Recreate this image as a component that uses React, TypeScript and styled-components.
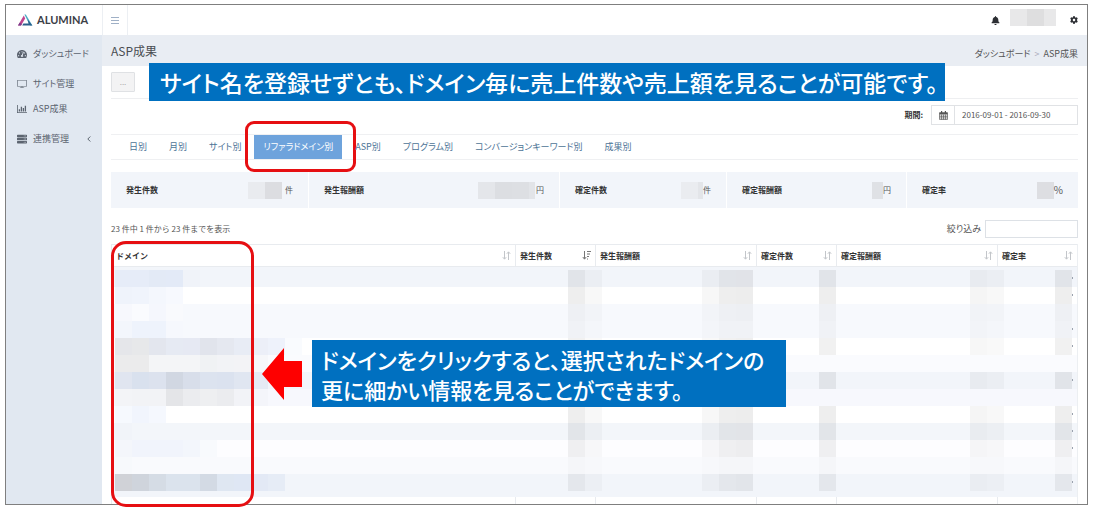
import React from 'react';
import styled, { createGlobalStyle, css } from 'styled-components';
import { FaBell, FaCog, FaServer, FaTachometerAlt } from 'react-icons/fa';
import { SlScreenDesktop } from 'react-icons/sl';

const GlobalStyle = createGlobalStyle`
  * { box-sizing: border-box; }
  body {
    margin: 0;
    background: #fff;
    color: #555;
    font-family: 'Noto Sans CJK JP', 'Noto Sans', sans-serif;
    font-size: 8px;
    line-height: 12px;
  }
  button, input { font: inherit; color: inherit; }
  a { color: inherit; text-decoration: none; }
  ul { list-style: none; margin: 0; padding: 0; }
`;

const proportional = css`
  font-size: 9px;
  font-feature-settings: 'palt';
`;

const Frame = styled.div`
  position: relative;
  margin: 4px 8px 6px 5px;
  border: 1px solid #7f7f7f;
  background: #fff;
`;

const Header = styled.header`
  display: flex;
  height: 30px;
`;

const Brand = styled.a`
  display: flex;
  align-items: center;
  gap: 4px;
  width: 96px;
  padding-left: 12px;
  color: #3c4047;
  font-family: Lato, sans-serif;
  font-size: 11px;
  font-weight: 700;
`;

const MenuButton = styled.button`
  display: flex;
  align-items: center;
  justify-content: center;
  width: 26px;
  padding: 0;
  border: solid #eceff3;
  border-width: 0 1px;
  background: none;
  color: #9fb0c6;
`;

const HeaderTools = styled.div`
  display: flex;
  align-items: center;
  gap: 10px;
  margin-left: auto;
  padding-right: 9px;
`;

const IconButton = styled.button`
  display: flex;
  padding: 0;
  border: 0;
  background: none;
  color: #2c2e33;
`;

const UserMask = styled.div`
  display: flex;
  height: 17px;
  margin: 0 4px 5px 0;
`;

const Tile = styled.span<{ $tone: string; $width?: number }>`
  flex: none;
  width: ${p => p.$width ?? 17}px;
  height: 17px;
  background: ${p => p.$tone};
`;

const Body = styled.div`
  display: flex;
`;

const Sidebar = styled.nav`
  display: flex;
  flex-direction: column;
  flex: none;
  gap: 5px;
  width: 96px;
  padding-top: 6px;
  background: #e1e8f1;
`;

const SideLink = styled.a`
  ${proportional}
  display: flex;
  align-items: center;
  gap: 6px;
  height: 25px;
  padding: 0 11px;
  color: #5c6470;
  white-space: nowrap;
  svg { flex: none; }
  svg:nth-of-type(2) { margin-left: auto; }
`;

const Main = styled.main`
  flex: 1;
  min-width: 0;
`;

const TitleBar = styled.div`
  display: flex;
  align-items: center;
  justify-content: space-between;
  height: 31px;
  padding: 0 9px;
  background: #e9edf3;
`;

const Title = styled.h1`
  margin: 0;
  font-size: 12px;
  font-weight: 400;
  line-height: 31px;
  color: #4a4d52;
`;

const Crumbs = styled.div`
  ${proportional}
  display: flex;
  gap: 4px;
  padding-top: 6px;
  i { color: #aab; font-style: normal; }
`;

const Content = styled.div`
  padding: 6px 9px 0;
`;

const ActionRow = styled.div`
  padding-bottom: 6px;
  border-bottom: 1px solid #eeeff1;
`;

const MoreButton = styled.button`
  display: block;
  width: 24px;
  height: 20px;
  padding: 0;
  border: 1px solid #dfe1e4;
  border-radius: 1px;
  background: #f3f3f4;
  color: #aaa;
`;

const PeriodRow = styled.div`
  display: flex;
  align-items: center;
  justify-content: flex-end;
  gap: 8px;
  padding: 6px 0 9px;
  label { color: #333; font-weight: 700; }
`;

const DateGroup = styled.div`
  display: flex;
  width: 147px;
  height: 20px;
  border: 1px solid #e0e2e5;
  input {
    flex: 1;
    min-width: 0;
    padding: 0 7px;
    border: 0;
    border-left: 1px solid #e0e2e5;
  }
`;

const DateIcon = styled.span`
  display: flex;
  align-items: center;
  justify-content: center;
  width: 22px;
`;

const Tabs = styled.ul`
  display: flex;
  gap: 4px;
  height: 26px;
  padding-left: 9px;
  border: solid #eff0f2;
  border-width: 1px 0;
`;

const Tab = styled.li`
  position: relative;
`;

const TabLink = styled.a<{ $active?: boolean }>`
  ${proportional}
  display: block;
  padding: 0 9px;
  line-height: 24px;
  white-space: nowrap;
  color: #4d7396;
  ${p => p.$active && css`
    background: #6ea3dc;
    color: #fff;
  `}
`;

const Outline = styled.div`
  position: absolute;
  border: 3px solid #e60f12;
  pointer-events: none;
`;

const TabOutline = styled(Outline)`
  inset: -14px -14px -13px -9px;
  border-radius: 9px;
`;

const DomainOutline = styled(Outline)`
  top: -3px;
  bottom: -3px;
  left: 0;
  width: 143px;
  border-radius: 15px;
`;

const Summary = styled.div`
  display: grid;
  grid-template-columns: 197fr 250fr 166fr 179fr 171fr;
  gap: 1px;
  margin-top: 12px;
`;

const SummaryItem = styled.div`
  display: flex;
  align-items: center;
  height: 36px;
  padding: 0 15px;
  background: #f2f5fa;
  strong { margin-right: auto; color: #333; }
`;

const SummaryMask = styled.div<{ $gap: number }>`
  display: flex;
  margin-right: ${p => p.$gap}px;
`;

const Unit = styled.span<{ $large?: boolean }>`
  font-size: ${p => (p.$large ? 10 : 8)}px;
`;

const ListBar = styled.div`
  display: flex;
  align-items: center;
  justify-content: space-between;
  padding: 12px 0 6px;
`;

const Filter = styled.label`
  ${proportional}
  display: flex;
  align-items: center;
  gap: 4px;
  input {
    width: 93px;
    height: 18px;
    padding: 0 4px;
    border: 1px solid #dde1e6;
  }
`;

const TableWrap = styled.div`
  position: relative;
`;

const Table = styled.table`
  width: 100%;
  table-layout: fixed;
  border-spacing: 0;
  border-right: 1px solid #eceff2;
`;

const HeadCell = styled.th<{ $width?: number }>`
  width: ${p => (p.$width ? `${p.$width}px` : 'auto')};
  height: 23px;
  padding: 0 4px;
  border: solid #e8ebef;
  border-width: 1px 0 1px 1px;
  color: #333;
  text-align: left;
`;

const HeadLabel = styled.span`
  display: flex;
  align-items: center;
  justify-content: space-between;
`;

const Row = styled.tr<{ $bg: string }>`
  height: 17px;
  background: ${p => p.$bg};
  &:first-child { height: 20px; vertical-align: bottom; }
  &:nth-last-child(2) { height: 23px; vertical-align: top; }
`;

const Cell = styled.td<{ $shift?: number }>`
  height: inherit;
  padding: 0 ${p => Math.max(p.$shift ?? 0, 0)}px 0 0;
  line-height: 0;
`;

const Tiles = styled.div<{ $end?: boolean; $shift?: number }>`
  display: flex;
  position: relative;
  height: 17px;
  padding-left: ${p => (p.$end ? 0 : 4)}px;
  justify-content: ${p => (p.$end ? 'flex-end' : 'flex-start')};
  margin-right: ${p => Math.min(p.$shift ?? 0, 0)}px;
`;

const Mark = styled.i`
  position: absolute;
  top: 7px;
  right: -1px;
  width: 1px;
  height: 2px;
  background: #9aa2ae;
`;

const TailCell = styled.td`
  height: 7px;
  padding: 0;
  border-left: 1px solid #e8ebef;
`;

const Callout = styled.p`
  position: absolute;
  margin: 0;
  background: #0070c0;
  color: #fff;
  font-weight: 500;
  font-feature-settings: 'palt';
  white-space: nowrap;
`;

const TopCallout = styled(Callout)`
  top: 58px;
  left: 143px;
  width: 796px;
  padding-left: 11px;
  font-size: 23px;
  line-height: 38px;
`;

const DomainCallout = styled(Callout)`
  top: 335px;
  left: 306px;
  width: 474px;
  padding: 4px 9px 3px;
  font-size: 22px;
  line-height: 30px;
`;

const Arrow = styled.svg`
  position: absolute;
  top: 343px;
  left: 256px;
`;

const Logo = () => (
  <svg width="15" height="12" viewBox="0 0 15 12" aria-hidden="true">
    <path d="M5.8 1.6 7.2 4.4 3 11.5 0 11.5Z" fill="#c0458f" />
    <path d="M1.6 8.8 3.9 9.9 3 11.5 0 11.5Z" fill="#7a3d8c" />
    <path d="M6.4.4 7.8.4 14.4 11.5 12 11.5Z" fill="#4aa9c4" />
    <path d="M9.6 5.4 14.4 11.5 4.2 11.5 5.4 9.4 10.6 9.4Z" fill="#2c5f8c" />
  </svg>
);

const BarChart = () => (
  <svg width="10" height="8" viewBox="0 0 20 16" fill="currentColor" aria-hidden="true">
    <path d="M0 0h1.6v14.4H20V16H0zM3.5 8.5h2.6v4.5H3.5zM7.5 3.5h2.6V13H7.5zM11.5 6h2.6v7h-2.6zM15.5 1.5h2.6V13h-2.6z" />
  </svg>
);

const Calendar = () => (
  <svg width="9" height="9" viewBox="0 0 18 18" aria-hidden="true">
    <path d="M1 3.5h16V17H1zM1 7.5h16M1 10.7h16M1 13.9h16M5 7v10M9 7v10M13 7v10" fill="none" stroke="#555" strokeWidth="1.3" />
    <path d="M1 3h16v3H1zM4 0h2.4v4H4zM11.6 0H14v4h-2.4z" fill="#555" />
  </svg>
);

const Burger = () => (
  <svg width="8" height="7" viewBox="0 0 8 7" fill="currentColor" aria-hidden="true">
    <path d="M0 0h8v1H0zM0 3h8v1H0zM0 6h8v1H0z" />
  </svg>
);

const Chevron = () => (
  <svg width="4" height="6" viewBox="0 0 4 6" fill="none" stroke="currentColor" aria-hidden="true">
    <path d="M3.3.5.8 3l2.5 2.5" />
  </svg>
);

const SortIcon = ({ active }: { active?: boolean }) =>
  active ? (
    <svg width="9" height="9" viewBox="0 0 9 9" aria-hidden="true">
      <path d="M2.5 0v8M.8 6 2.5 8.2 4.2 6" fill="none" stroke="#777" />
      <path d="M5 .5h4M5 3h3M5 5.5h2M5 8h1" stroke="#777" />
    </svg>
  ) : (
    <svg width="9" height="9" viewBox="0 0 9 9" fill="none" stroke="#c3c6ca" aria-hidden="true">
      <path d="M2.5 0v8M.8 6.2 2.5 8.2 4.2 6.2M6.5 9V1M4.8 2.8 6.5.8 8.2 2.8" />
    </svg>
  );

const tabs = ['日別', '月別', 'サイト別', 'リファラドメイン別', 'ASP別', 'プログラム別', 'コンバージョンキーワード別', '成果別'];

const summary = [
  { label: '発生件数', unit: '件', gap: 3, tiles: [['#e9ebef', 17], ['#dcdde1', 17]] },
  { label: '発生報酬額', unit: '円', gap: 1, tiles: [['#e4e6ea', 17], ['#dcdee2', 17], ['#dddfe3', 17], ['#e2e4e8', 6]] },
  { label: '確定件数', unit: '件', gap: 0, tiles: [['#eaecf0', 17], ['#e3e5e9', 5]] },
  { label: '確定報酬額', unit: '円', gap: 0, tiles: [['#dfe1e5', 11]] },
  { label: '確定率', unit: '%', gap: 0, tiles: [['#dddee2', 17]] },
] as { label: string; unit: string; gap: number; tiles: [string, number][] }[];

const columns = [
  { label: 'ドメイン' },
  { label: '発生件数', width: 80, active: true },
  { label: '発生報酬額', width: 161 },
  { label: '確定件数', width: 80 },
  { label: '確定報酬額', width: 161 },
  { label: '確定率', width: 80 },
];

// Relative darkness of each masked figure, and how far the mask sits from the cell's right edge.
const masks = [
  { weights: [1, 0.45], shift: -7 },
  { weights: [0.5, 1, 1.1], shift: 3 },
  { weights: [1], shift: 0 },
  { weights: [0.6, 0.45], shift: -7 },
  { weights: [1], shift: 5 },
];

const rows = [
  { bg: '#f2f5fa', level: 0.07, mark: true, tones: 'e6ecf8 e6ecf8 e3eaf6 e3eaf7 f0f3f9' },
  { bg: '#ffffff', level: 0.07, mark: true, tones: 'eff3fb f0f4fc f4f7fd f7f9fe' },
  { bg: '#f7f9fd', level: 0.04, mark: false, tones: 'f7f8fd fafbfe f5f7fd f9fafd' },
  { bg: '#f7f9fd', level: 0.03, mark: true, tones: 'f3f6fc eef3fc eef3fc f6f8fd' },
  { bg: '#ffffff', level: 0.06, mark: true, tones: 'e5e6ea e7e8ea e3e6ee e6eaf3 e6e9f3 e1e4ec e5e8f0 e8ecf5 eceff8 eef2fb f9fbfe' },
  { bg: '#fafbfe', level: 0, mark: false, tones: 'ebebec ebebec f4f5f7 f4f5f7 f4f5f7 f0f2f4 f2f3f6 f3f3f6 f6f7fa' },
  { bg: '#f2f5fa', level: 0.07, mark: true, tones: 'e0e5f0 d9e1ee dce2ee d1d7e2 d8deea dce3ef dbe2ef e0e6f1 e5eaf4' },
  { bg: '#f7f8fd', level: 0, mark: false, tones: 'f3f4f7 f2f3f6 f2f3f6 e4e5e8 ebecef eeeff1 ebecef f2f3f7 f4f5fa' },
  { bg: '#ffffff', level: 0.07, mark: true, tones: 'f6f9fe f1f5fd f5f8fe' },
  { bg: '#f3f6fa', level: 0.07, mark: true, tones: 'f1f4f9' },
  { bg: '#fdfdff', level: 0.06, mark: true, tones: 'f4f6fb f1f4fc f1f4fc f1f4fc f3f6fc f8fafd' },
  { bg: '#f9fafd', level: 0.015, mark: false, tones: 'f7f9fc' },
  { bg: '#f2f5fa', level: 0.06, mark: true, tones: 'd0d2d7 cfd4dc d5dce5 dbe3ed dbe3ed d3dae4 dfe7f2 dfe7f4 e3e9f5 e6ecf6' },
];

export default function App() {
  return (
    <>
      <GlobalStyle />
      <Frame>
        <Header>
          <Brand href="#"><Logo />ALUMINA</Brand>
          <MenuButton aria-label="メニュー"><Burger /></MenuButton>
          <HeaderTools>
            <IconButton aria-label="通知"><FaBell size={9} /></IconButton>
            <UserMask>
              <Tile $tone="#e8e8e9" /><Tile $tone="#dededf" /><Tile $tone="#e8e8e9" $width={12} />
            </UserMask>
            <IconButton aria-label="設定"><FaCog size={8} /></IconButton>
          </HeaderTools>
        </Header>
        <Body>
          <Sidebar>
            <SideLink href="#"><FaTachometerAlt size={10} />ダッシュボード</SideLink>
            <div>
              <SideLink href="#"><SlScreenDesktop size={10} />サイト管理</SideLink>
              <SideLink href="#"><BarChart />ASP成果</SideLink>
            </div>
            <SideLink href="#"><FaServer size={10} />連携管理<Chevron /></SideLink>
          </Sidebar>
          <Main>
            <TitleBar>
              <Title>ASP成果</Title>
              <Crumbs><a href="#">ダッシュボード</a><i>&gt;</i><span>ASP成果</span></Crumbs>
            </TitleBar>
            <Content>
              <ActionRow><MoreButton>...</MoreButton></ActionRow>
              <PeriodRow>
                <label htmlFor="period">期間:</label>
                <DateGroup>
                  <DateIcon><Calendar /></DateIcon>
                  <input id="period" defaultValue="2016-09-01 - 2016-09-30" />
                </DateGroup>
              </PeriodRow>
              <Tabs>
                {tabs.map((name, i) => (
                  <Tab key={name}>
                    <TabLink href="#" $active={i === 3}>{name}</TabLink>
                    {i === 3 && <TabOutline />}
                  </Tab>
                ))}
              </Tabs>
              <Summary>
                {summary.map(s => (
                  <SummaryItem key={s.label}>
                    <strong>{s.label}</strong>
                    <SummaryMask $gap={s.gap}>
                      {s.tiles.map(([tone, width], i) => <Tile key={i} $tone={tone} $width={width} />)}
                    </SummaryMask>
                    <Unit $large={s.unit === '%'}>{s.unit}</Unit>
                  </SummaryItem>
                ))}
              </Summary>
              <ListBar>
                <span>23 件中 1 件から 23 件までを表示</span>
                <Filter>絞り込み<input type="search" /></Filter>
              </ListBar>
              <TableWrap>
                <Table>
                  <thead>
                    <tr>
                      {columns.map(c => (
                        <HeadCell key={c.label} $width={c.width}>
                          <HeadLabel>{c.label}<SortIcon active={c.active} /></HeadLabel>
                        </HeadCell>
                      ))}
                    </tr>
                  </thead>
                  <tbody>
                    {rows.map((r, i) => (
                      <Row key={i} $bg={r.bg}>
                        <Cell>
                          <Tiles>
                            {r.tones.split(' ').map((t, j) => <Tile key={j} $tone={`#${t}`} />)}
                          </Tiles>
                        </Cell>
                        {masks.map((m, k) => (
                          <Cell key={k} $shift={m.shift}>
                            <Tiles $end $shift={m.shift}>
                              {m.weights.map((w, j) => (
                                <Tile key={j} $tone={`rgba(20, 20, 20, ${(w * r.level).toFixed(3)})`} />
                              ))}
                              {r.mark && k === masks.length - 1 && <Mark />}
                            </Tiles>
                          </Cell>
                        ))}
                      </Row>
                    ))}
                    <tr>
                      {columns.map(c => <TailCell key={c.label} />)}
                    </tr>
                  </tbody>
                </Table>
                <DomainOutline />
              </TableWrap>
            </Content>
          </Main>
        </Body>
        <TopCallout>サイト名を登録せずとも、ドメイン毎に売上件数や売上額を見ることが可能です。</TopCallout>
        <DomainCallout>
          ドメインをクリックすると、選択されたドメインの<br />更に細かい情報を見ることができます。
        </DomainCallout>
        <Arrow width="40" height="52" viewBox="0 0 40 52" aria-hidden="true">
          <path d="M0 26 22 0V13H40V39H22V52Z" fill="#fe0000" />
        </Arrow>
      </Frame>
    </>
  );
}
